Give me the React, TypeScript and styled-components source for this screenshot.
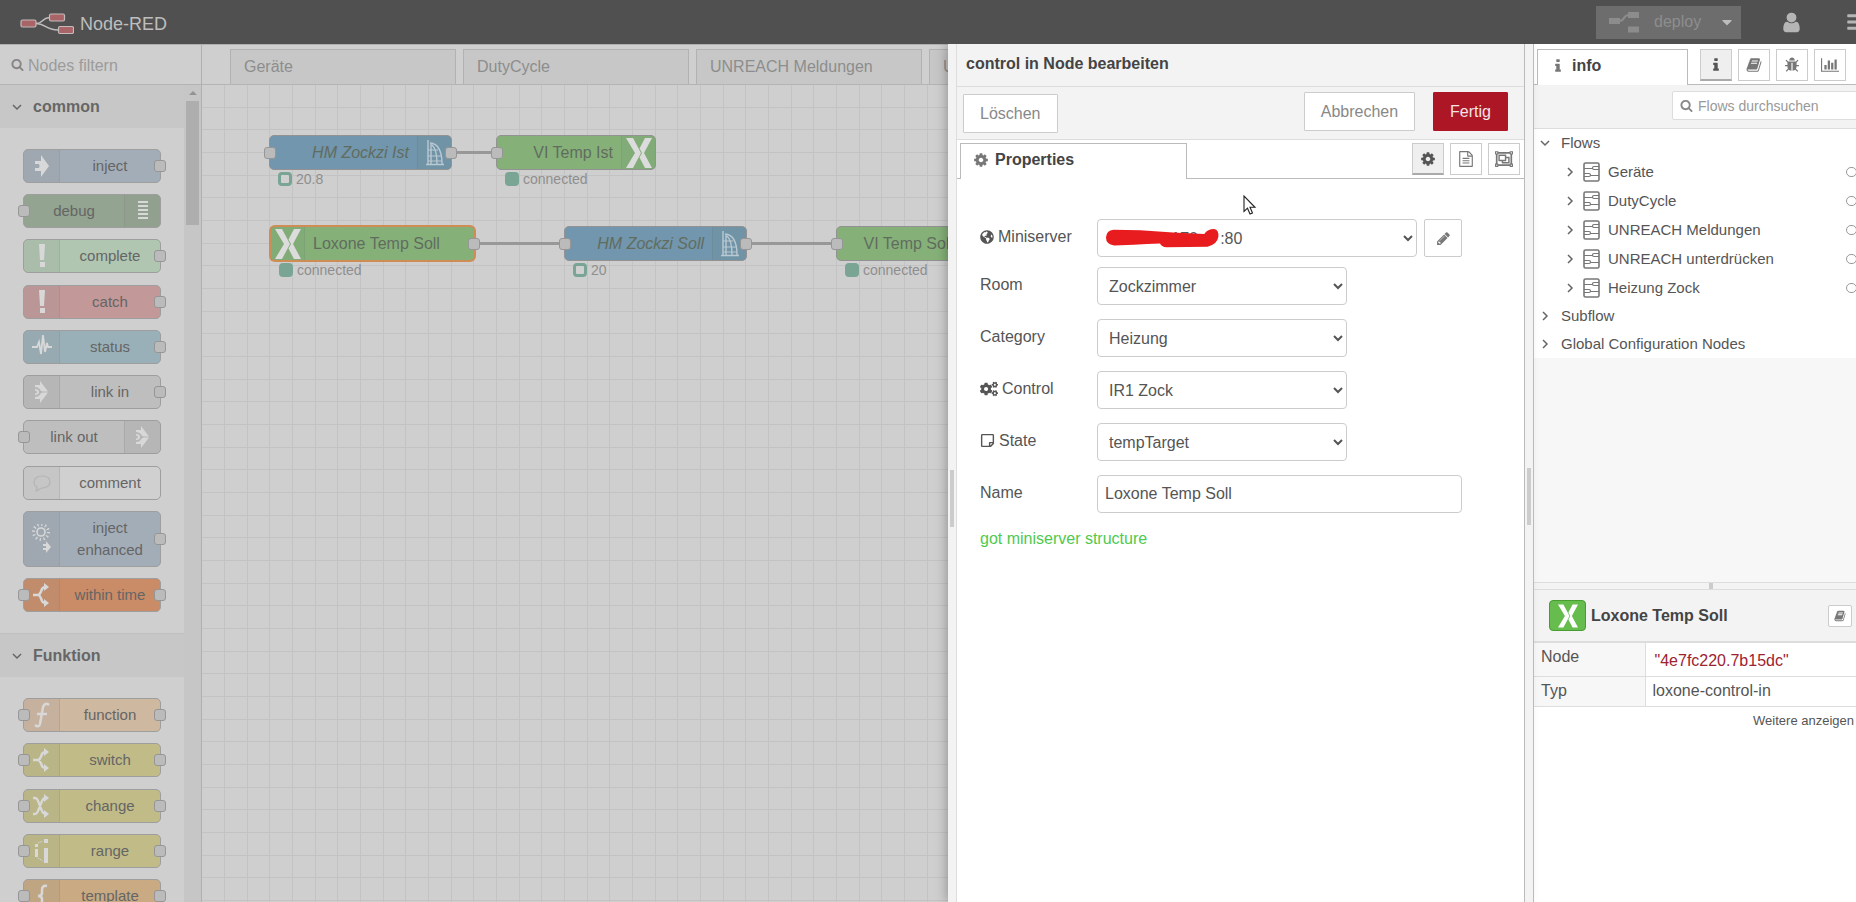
import React from "react";
import styled, { createGlobalStyle, css } from "styled-components";
import {
  FaBars,
  FaCaretDown,
  FaCogs,
  FaGlobeAmericas,
  FaRegObjectGroup,
  FaRegStickyNote,
} from "react-icons/fa";

const GlobalStyle = createGlobalStyle`
  *, *::before, *::after { box-sizing: border-box; }
  html, body { margin: 0; height: 100%; overflow: hidden; }
  body { font-family: "Liberation Sans", Arial, sans-serif; font-size: 16px; line-height: 20px; color: #555; }
  button, input, select { font: inherit; color: inherit; margin: 0; }
  svg { display: block; flex: none; }
`;

/* ---------- icons ---------- */

const PATHS = {
  search:
    "M1216 832q0-185-131.5-316.5t-316.5-131.5-316.5 131.5-131.5 316.5 131.5 316.5 316.5 131.5 316.5-131.5 131.5-316.5zm512 832q0 52-38 90t-90 38q-54 0-90-38l-343-342q-179 124-399 124-143 0-273.5-55.5t-225-150-150-225-55.5-273.5 55.5-273.5 150-225 225-150 273.5-55.5 273.5 55.5 225 150 150 225 55.5 273.5q0 220-124 399l343 343q37 37 37 90z",
  cog: "M1152 896q0-106-75-181t-181-75-181 75-75 181 75 181 181 75 181-75 75-181zm512-109v222q0 12-8 23t-20 13l-185 28q-19 54-39 91 35 50 107 138 10 12 10 25t-9 23q-27 37-99 108t-94 71q-12 0-26-9l-138-108q-44 23-91 38-16 136-29 186-7 28-36 28h-222q-14 0-24.5-8.5t-11.5-21.5l-28-184q-49-16-90-37l-141 107q-10 9-25 9-14 0-25-11-126-114-165-168-7-10-7-23 0-12 8-23 15-21 51-66.5t54-70.5q-27-50-41-99l-183-27q-13-2-21-12.5t-8-23.5v-222q0-12 8-23t19-13l186-28q14-46 39-92-40-57-107-138-10-12-10-24 0-10 9-23 26-36 98.5-107.5t94.5-71.5q13 0 26 10l138 107q44-23 91-38 16-136 29-186 7-28 36-28h222q14 0 24.5 8.5t11.5 21.5l28 184q49 16 90 37l142-107q9-9 24-9 13 0 25 10 129 119 165 170 7 8 7 22 0 12-8 23-15 21-51 66.5t-54 70.5q26 50 41 98l183 28q13 2 21 12.5t8 23.5z",
  user: "M1536 1399q0 109-62.5 187t-150.5 78h-854q-88 0-150.5-78t-62.5-187q0-85 8.5-160.5t31.5-152 58.5-131 94-89 134.5-34.5q131 128 313 128t313-128q76 0 134.5 34.5t94 89 58.5 131 31.5 152 8.5 160.5zm-256-887q0 159-112.5 271.5t-271.5 112.5-271.5-112.5-112.5-271.5 112.5-271.5 271.5-112.5 271.5 112.5 112.5 271.5z",
  info: "M1216 1344v128q0 26-19 45t-45 19h-512q-26 0-45-19t-19-45v-128q0-26 19-45t45-19h64v-384h-64q-26 0-45-19t-19-45v-128q0-26 19-45t45-19h384q26 0 45 19t19 45v576h64q26 0 45 19t19 45zm-128-1152v192q0 26-19 45t-45 19h-256q-26 0-45-19t-19-45v-192q0-26 19-45t45-19h256q26 0 45 19t19 45z",
  book: "M1703 478q40 57 18 129l-275 906q-19 64-76.5 107.5t-122.5 43.5h-923q-77 0-148.5-53.5t-99.5-131.5q-24-67-2-127 0-4 3-27t4-37q1-8-3-21.5t-3-19.5q2-11 8-21t16.5-23.5 16.5-23.5q23-38 45-91.5t30-91.5q3-10 .5-30t-.5-28q3-11 17-28t17-23q21-36 42-92t25-90q1-9-2.5-32t.5-28q4-13 22-30.5t22-22.5q19-26 42.5-84.5t27.5-96.5q1-8-3-25.5t-2-26.5q2-8 9-18t18-23 17-21q8-12 16.5-30.5t15-35 16-36 19.5-32 26.5-23.5 36-11.5 47.5 5.5l-1 3q38-9 51-9h761q74 0 114 56t18 130l-274 906q-36 119-71.5 153.5t-128.5 34.5h-869q-27 0-38 15-11 16-1 43 24 70 144 70h923q29 0 56-15.5t35-41.5l300-987q7-22 5-57 38 15 59 43zm-1064 2q-4 13 2 22.5t20 9.5h608q13 0 25.5-9.5t16.5-22.5l21-64q4-13-2-22.5t-20-9.5h-608q-13 0-25.5 9.5t-16.5 22.5zm-83 256q-4 13 2 22.5t20 9.5h608q13 0 25.5-9.5t16.5-22.5l21-64q4-13-2-22.5t-20-9.5h-608q-13 0-25.5 9.5t-16.5 22.5z",
  pencil:
    "M491 1536l91-91-235-235-91 91v107h128v128h107zm523-928q0-22-22-22-10 0-17 7l-542 542q-7 7-7 17 0 22 22 22 10 0 17-7l542-542q7-7 7-17zm-54-192l416 416-832 832h-416v-416zm683 96q0 53-37 90l-166 166-416-416 166-165q36-38 90-38 53 0 91 38l235 234q37 39 37 91z",
  file: "M1596 380q28 28 48 76t20 88v1152q0 40-28 68t-68 28h-1344q-40 0-68-28t-28-68v-1600q0-40 28-68t68-28h896q40 0 88 20t76 48zm-444-244v376h376q-10-29-22-41l-313-313q-12-12-41-22zm384 1528v-1024h-416q-40 0-68-28t-28-68v-416h-768v1536h1280zm-1024-864q0-14 9-23t23-9h704q14 0 23 9t9 23v64q0 14-9 23t-23 9h-704q-14 0-23-9t-9-23v-64zm736 224q14 0 23 9t9 23v64q0 14-9 23t-23 9h-704q-14 0-23-9t-9-23v-64q0-14 9-23t23-9h704zm0 256q14 0 23 9t9 23v64q0 14-9 23t-23 9h-704q-14 0-23-9t-9-23v-64q0-14 9-23t23-9h704z",
  chart:
    "M640 896v512h-256v-512h256zm384-512v1024h-256v-1024h256zm1024 1152v128h-2048v-1536h128v1408h1920zm-640-896v768h-256v-768h256zm384-384v1152h-256v-1152h256z",
  bug: "M1696 960q0 26-19 45t-45 19h-224q0 171-67 290l208 209q19 19 19 45t-19 45q-18 19-45 19t-45-19l-198-197q-5 5-15 13t-42 28.5-65 36.5-82 29-97 13v-896h-128v896q-51 0-101.5-13.5t-87-33-66-39-43.5-32.5l-15-14-183 207q-20 21-48 21-24 0-43-16-19-18-20.5-44.5t15.5-46.5l202-227q-58-114-58-274h-224q-26 0-45-19t-19-45 19-45 45-19h224v-294l-173-173q-19-19-19-45t19-45 45-19 45 19l173 173h844l173-173q19-19 45-19t45 19 19 45-19 45l-173 173v294h224q26 0 45 19t19 45zm-480-576h-640q0-133 93.5-226.5t226.5-93.5 226.5 93.5 93.5 226.5z",
};

function Icon({ name, size = 16, color = "currentColor" }: { name: keyof typeof PATHS; size?: number; color?: string }) {
  const wide = name === "chart";
  return (
    <svg width={wide ? size + 2 : size} height={size} viewBox={wide ? "0 0 2048 1792" : "0 0 1792 1792"} fill={color} aria-hidden>
      <path d={PATHS[name]} />
    </svg>
  );
}

function Angle({ dir, color = "#666" }: { dir: "down" | "right"; color?: string }) {
  return (
    <svg width="10" height="10" viewBox="0 0 10 10" fill="none" stroke={color} strokeWidth="1.5" aria-hidden>
      <path d={dir === "down" ? "M1 3l4 4 4-4" : "M3 1l4 4-4 4"} />
    </svg>
  );
}

function LogoIcon() {
  return (
    <svg width="54" height="22" viewBox="0 0 54 22" fill="none" aria-hidden>
      <path d="M16 10.5C24 10.5 21 4.500 31 4.500M16 10.500C26 10.500 25 17 38 17" stroke="#bdbdbd" strokeWidth="1.600" />
      <g fill="#a96467" stroke="#c4bcbc" strokeWidth="1.200">
        <rect x="1" y="7" width="15" height="7" rx="1.500" />
        <rect x="29.500" y="1" width="15" height="7" rx="1.500" />
        <rect x="38.500" y="13.500" width="15" height="7" rx="1.500" />
      </g>
    </svg>
  );
}

function DeployIcon() {
  return (
    <svg width="32" height="22" viewBox="0 0 32 22" aria-hidden>
      <path d="M11 10C18 10 14 4 21 4" fill="none" stroke="#8c8c8c" strokeWidth="2" />
      <g fill="#8c8c8c">
        <rect x="1" y="7" width="11" height="6" />
        <rect x="20" y="1" width="11" height="6" />
        <rect x="20" y="15.500" width="11" height="6" />
      </g>
    </svg>
  );
}

function FlowIcon() {
  return (
    <svg width="17" height="20" viewBox="0 0 17 20" fill="none" stroke="#777" strokeWidth="1.200" aria-hidden>
      <rect x="1" y="1" width="15" height="18" rx="1.500" strokeWidth="1.600" />
      <path d="M16 4.500H11Q9.500 4.500 9.500 6T11 7.500H16M1 6.500H9.500M1 11.500H6Q7.500 11.500 7.500 13T6 14.500H1M7.500 13.500H16" />
    </svg>
  );
}

function LoxoneIcon({ size = 30, color = "#dcdcdc" }: { size?: number; color?: string }) {
  return (
    <svg width={size - 4} height={size} viewBox="0 0 26 30" fill={color} aria-hidden>
      <path d="M0 0H7L15 15 7 30H0L9 15z" />
      <path d="M19 0H26L18 15 26 30H19L13.500 19.600 16 15 13.500 10.400z" />
    </svg>
  );
}

function HomematicIcon() {
  return (
    <svg width="20" height="26" viewBox="0 0 20 26" fill="none" stroke="#b9c9d3" strokeWidth="1.400" aria-hidden>
      <path d="M3 0V24M1 24.500H19M6 3V24M5 3Q17 4 17 24M7 5Q12 9 12 24" />
      <path d="M3 10H13M3 16H16M3 21H17" strokeWidth="1" />
    </svg>
  );
}

type Glyph =
  | "inject" | "debug" | "bang" | "status" | "link" | "comment" | "enhanced"
  | "switch" | "function" | "change" | "range" | "template";

const GLYPHS: Record<Glyph, React.ReactNode> = {
  inject: <path d="M9 4l8 11-8 11v-6H3v-3h4q1-2 0-4H3v-3h6z" />,
  debug: <path d="M5 5h10v2H5zM5 9h10v2H5zM5 13h10v2H5zM5 17h10v2H5zM5 21h10v2H5z" />,
  bang: <path d="M7 3h6l-1 16H8zM8 21h5v5H8z" />,
  status: <path d="M0 15h5l2-5 2 12 2-19 2 17 2-9 1 4h4" fill="none" stroke="currentColor" strokeWidth="1.800" />,
  link: (
    <path d="M8 4l8 10.500h-5q-2 0-3-2T3 10V8h5zM8 26l8-10.500h-5q-2 0-3 2T3 20v2h5zM3 12q4 0 4 3t-4 3v-1.500q2 0 2-1.500t-2-1.500z" />
  ),
  comment: (
    <path d="M10 8c5 0 8 2 8 6s-4 6-8 6c-2 0-3 2-6 3l1-4c-2-1-3-3-3-5 0-4 4-6 8-6z" fill="none" stroke="currentColor" strokeWidth="1.200" />
  ),
  enhanced: (
    <>
      <g fill="none" stroke="currentColor">
        <circle cx="9" cy="8" r="4" strokeWidth="1.600" />
        <circle cx="9" cy="8" r="7.500" strokeWidth="3" strokeDasharray="1.300 2.627" />
      </g>
      <path d="M14 17l5 6-5 6v-3h-3v-2h3v-2h-3v-2h3z" />
    </>
  ),
  switch: (
    <>
      <path d="M1 15h5q2 0 4-6 1-2 4-2M6 15q2 0 4 6 1 2 4 2" fill="none" stroke="currentColor" strokeWidth="2.500" />
      <path d="M12 3l5 4-5 4zM12 19l5 4-5 4z" />
    </>
  ),
  function: <path d="M17 5q-4-3-6 2L8 24q-1 4-5 1M5 14h10" fill="none" stroke="currentColor" strokeWidth="2.500" />,
  change: (
    <>
      <path d="M1 7h2q2 0 3 3l4 10q1 3 4 3M1 23h2q2 0 3-3l4-10q1-3 4-3" fill="none" stroke="currentColor" strokeWidth="2.300" />
      <path d="M12 3l5 4-5 4zM12 19l5 4-5 4z" />
    </>
  ),
  range: (
    <>
      <path d="M3 8h3v3H3zM3 13h3v8H3zM12 3h4v4h-4zM12 12h4v15h-4z" />
      <path d="M6 7l5-2M6 22l5 3" fill="none" stroke="currentColor" strokeDasharray="1.500 1" />
    </>
  ),
  template: <path d="M15 5q-5-1-5 4v3q0 3-4 3 4 0 4 3v3q0 5 5 4" fill="none" stroke="currentColor" strokeWidth="2.500" />,
};

function NodeGlyph({ glyph }: { glyph: Glyph }) {
  return (
    <svg width="20" height="30" viewBox="0 0 20 30" fill="currentColor" aria-hidden>
      {GLYPHS[glyph]}
    </svg>
  );
}

/* ---------- shell ---------- */

const Shell = styled.div`
  width: calc(100% + 32px);
  height: 100vh;
  display: flex;
  flex-direction: column;
  overflow: hidden;
`;

const Header = styled.header`
  position: relative;
  z-index: 2;
  flex: none;
  height: 44px;
  display: flex;
  align-items: center;
  justify-content: space-between;
  padding: 0 21px 0 20px;
  background: #505050;
`;

const Brand = styled.div`
  display: flex;
  align-items: center;
  gap: 6px;
  font-size: 18px;
  color: #bebebe;
  padding-top: 3px;
`;

const HeaderTools = styled.div`
  display: flex;
  align-items: center;
`;

const DeployButton = styled.button`
  width: 145px;
  height: 33px;
  margin: 0 39px 0 0;
  padding: 0 6px 0 12px;
  display: flex;
  align-items: center;
  gap: 14px;
  border: 0;
  background: #6d6d6d;
  color: #8e8e8e;
  svg:last-child { color: #bdbdbd; margin-left: auto; }
`;

const HeaderIcon = styled.button`
  width: 22px;
  height: 33px;
  padding: 0;
  margin: 0 43px 0 0;
  display: grid;
  place-items: center;
  border: 0;
  background: none;
  color: #b5b5b5;
  &:last-child { margin-right: 0; }
`;

const Main = styled.div`
  flex: 1;
  min-height: 0;
  display: flex;
`;

/* ---------- palette ---------- */

const Palette = styled.aside`
  flex: 0 0 202px;
  min-width: 0;
  display: flex;
  flex-direction: column;
  border-right: 1px solid #b0b0b0;
  border-top: 1px solid #b0b0b0;
  background: #cfcfcf;
`;

const PaletteSearch = styled.label`
  flex: none;
  height: 40px;
  display: flex;
  align-items: center;
  gap: 4px;
  padding-left: 11px;
  border-bottom: 1px solid #b4b4b4;
  color: #858585;
  input {
    min-width: 0;
    flex: 1;
    padding: 2px 0 0;
    border: 0;
    outline: 0;
    background: none;
  }
  input::placeholder { color: #9b9b9b; }
`;

const PaletteBody = styled.div`
  flex: 1;
  min-height: 0;
  display: flex;
  overflow: hidden;
`;

const PaletteList = styled.div`
  flex: 1;
  height: max-content;
`;

const ScrollTrack = styled.div`
  flex: 0 0 17px;
  display: flex;
  flex-direction: column;
  align-items: center;
  gap: 6px;
  padding-top: 6px;
  background: #c6c6c6;
`;

const ScrollArrow = styled.div`
  border: 4px solid transparent;
  border-top: 0;
  border-bottom-color: #939393;
`;

const ScrollThumb = styled.div`
  width: 13px;
  height: 124px;
  background: #aeaeae;
`;

const CategoryHeader = styled.h2`
  margin: 0;
  height: 43px;
  display: flex;
  align-items: center;
  gap: 11px;
  padding-left: 12px;
  background: #c7c7c7;
  font-size: 16px;
  color: #666;
`;

const CategoryNodes = styled.div<{ $height: number }>`
  height: ${(p) => p.$height}px;
  padding: 21px 23px;
  display: flex;
  flex-direction: column;
  justify-content: space-between;
  border-bottom: 1px solid #c0c0c0;
`;

const PaletteNode = styled.div<{ $color: string; $flip?: boolean; $tall?: boolean }>`
  position: relative;
  width: 138px;
  height: ${(p) => (p.$tall ? 56 : 34)}px;
  display: flex;
  flex-direction: ${(p) => (p.$flip ? "row-reverse" : "row")};
  border: 1px solid #9e9e9e;
  border-radius: 5px;
  background: ${(p) => p.$color};
`;

const iconWell = css`
  display: grid;
  place-items: center;
  flex: none;
  background: rgba(140, 140, 140, 0.15);
`;

const PaletteIcon = styled.div<{ $flip?: boolean; $faint?: boolean }>`
  ${iconWell}
  width: 36px;
  color: ${(p) => (p.$faint ? "#b4b4b4" : "#d8d8d8")};
  border-radius: ${(p) => (p.$flip ? "0 4px 4px 0" : "4px 0 0 4px")};
  border-${(p) => (p.$flip ? "left" : "right")}: 1px solid rgba(120, 120, 120, 0.2);
`;

const PaletteLabel = styled.div`
  flex: 1;
  display: grid;
  place-items: center;
  text-align: center;
  font-size: 15px;
  line-height: 22px;
  color: #656565;
`;

const Port = styled.span<{ $side: "in" | "out" }>`
  position: absolute;
  top: calc(50% - 6px);
  ${(p) => (p.$side === "in" ? "left" : "right")}: -6px;
  width: 12px;
  height: 12px;
  border: 1px solid #969696;
  border-radius: 3px;
  background: #bbb;
`;

/* ---------- workspace ---------- */

const Workspace = styled.main`
  flex: 1;
  min-width: 0;
  display: flex;
  flex-direction: column;
  overflow: hidden;
  border-top: 1px solid #b0b0b0;
  background: #cfcfcf;
`;

const WorkspaceTabs = styled.nav`
  flex: none;
  height: 40px;
  display: flex;
  align-items: flex-end;
  gap: 7px;
  padding-left: 28px;
  border-bottom: 1px solid #b4b4b4;
`;

const WorkspaceTab = styled.a`
  flex: 0 0 226px;
  height: 35px;
  padding: 7px 13px;
  border: 1px solid #b2b2b2;
  border-bottom: 0;
  background: #c7c7c7;
  color: #8d8d8d;
  text-decoration: none;
  white-space: nowrap;
`;

const Canvas = styled.div`
  position: relative;
  flex: 1;
  overflow: hidden;
`;

const Grid = styled.svg`
  width: 100%;
  height: 100%;
`;

const Wire = styled.div<{ $x: number; $y: number; $length: number }>`
  position: absolute;
  left: ${(p) => p.$x}px;
  top: ${(p) => p.$y}px;
  width: ${(p) => p.$length}px;
  height: 3px;
  background: #989898;
`;

const FlowNode = styled.div<{ $x: number; $y: number; $w: number; $color: string; $selected?: boolean; $flip?: boolean }>`
  position: absolute;
  left: ${(p) => p.$x}px;
  top: ${(p) => p.$y}px;
  width: ${(p) => p.$w}px;
  height: 35px;
  display: flex;
  flex-direction: ${(p) => (p.$flip ? "row-reverse" : "row")};
  border: 1px solid ${(p) => (p.$selected ? "#cf8d55" : "#929292")};
  box-shadow: ${(p) => (p.$selected ? "0 0 0 1px #cf8d55" : "none")};
  border-radius: 5px;
  background: ${(p) => p.$color};
`;

const FlowIconWell = styled.div<{ $flip?: boolean }>`
  ${iconWell}
  width: 34px;
  background: rgba(110, 130, 110, 0.1);
  border-${(p) => (p.$flip ? "left" : "right")}: 1px solid rgba(90, 90, 90, 0.12);
`;

const FlowLabel = styled.div<{ $italic?: boolean; $flip?: boolean }>`
  flex: 1;
  padding: 0 8px;
  line-height: 33px;
  text-align: ${(p) => (p.$flip ? "right" : "left")};
  font-style: ${(p) => (p.$italic ? "italic" : "normal")};
  color: #616c5f;
  white-space: nowrap;
`;

const FlowStatus = styled.div`
  position: absolute;
  left: 8px;
  top: 35px;
  display: flex;
  align-items: center;
  gap: 4px;
  font-size: 14px;
  line-height: 16px;
  color: #8e8e8e;
`;

const StatusDot = styled.span<{ $ring?: boolean }>`
  width: 14px;
  height: 14px;
  border: 3px solid #7aa595;
  border-radius: 4px;
  background: ${(p) => (p.$ring ? "#d0d0d0" : "#7aa595")};
`;

/* ---------- edit tray ---------- */

const Tray = styled.section`
  position: relative;
  z-index: 1;
  flex: 0 0 577px;
  display: flex;
  background: #fff;
  border-right: 1px solid #bbb;
  box-shadow: 0 0 12px rgba(0, 0, 0, 0.35);
`;

const Separator = styled.div`
  flex: 0 0 9px;
  display: flex;
  align-items: center;
  justify-content: center;
  border-right: 1px solid #ddd;
  background: #f3f3f3;
  padding-top: 50px;
  &::before {
    content: "";
    width: 4px;
    height: 57px;
    background: #ccc;
  }
`;

const SidebarSeparator = styled(Separator)`
  position: relative;
  z-index: 1;
  border-right-color: #bbb;
  padding-top: 46px;
`;

const TrayBody = styled.div`
  flex: 1;
  min-width: 0;
`;

const TrayTitle = styled.h1`
  margin: 0;
  height: 43px;
  padding: 10px 9px;
  border-bottom: 1px solid #ddd;
  background: #f3f3f3;
  font-size: 16px;
  line-height: 20px;
  color: #444;
`;

const TrayToolbar = styled.div`
  height: 53px;
  display: flex;
  align-items: flex-start;
  padding: 5px 16px 0 6px;
  border-bottom: 1px solid #ddd;
  background: #f3f3f3;
`;

const TrayButton = styled.button<{ $primary?: boolean; $left?: boolean }>`
  height: 39px;
  padding: 0 16px;
  margin: ${(p) => (p.$left ? "2px auto 0 0" : "0 0 0 18px")};
  border: 1px solid ${(p) => (p.$primary ? "#ad1625" : "#ccc")};
  border-radius: 1px;
  background: ${(p) => (p.$primary ? "#ad1625" : "#fff")};
  color: ${(p) => (p.$primary ? "#f3e4e5" : "#888")};
`;

const TabRow = styled.div<{ $pad: number }>`
  height: ${(p) => (p.$pad === 4 ? 39 : 41)}px;
  display: flex;
  align-items: flex-end;
  padding: 0 ${(p) => p.$pad}px 0 3px;
  border-bottom: 1px solid #bbb;
  background: #fff;
`;

const ActiveTab = styled.div<{ $width: number }>`
  flex: 0 0 ${(p) => p.$width}px;
  height: 36px;
  margin: 0 auto -1px 0;
  display: flex;
  align-items: center;
  gap: 6px;
  padding: 0 12px 3px;
  border: 1px solid #bbb;
  border-bottom: 0;
  background: #fff;
  font-weight: bold;
  color: #444;
  svg { color: #777; }
`;

const IconButton = styled.button<{ $on?: boolean }>`
  flex: none;
  width: 32px;
  height: 32px;
  margin: 0 0 3px 6px;
  padding: 0;
  display: grid;
  place-items: center;
  border: 1px solid #ccc;
  border-bottom: ${(p) => (p.$on ? "2px solid #aaa" : "1px solid #ccc")};
  background: ${(p) => (p.$on ? "#efefef" : "#fff")};
  color: ${(p) => (p.$on ? "#555" : "#777")};
`;

const Form = styled.form`
  padding: 40px 23px 0;
`;

const FormRow = styled.div<{ $tight?: boolean }>`
  display: flex;
  align-items: center;
  margin-bottom: ${(p) => (p.$tight ? 10 : 14)}px;
`;

const FormLabel = styled.label`
  flex: 0 0 117px;
  display: flex;
  align-items: center;
  gap: 4px;
  padding-bottom: 3px;
  color: #555;
`;

const SelectWrap = styled.div<{ $width: number }>`
  position: relative;
  width: ${(p) => p.$width}px;
`;

const Select = styled.select`
  width: 100%;
  height: 38px;
  padding: 0 5px 0 7px;
  border: 1px solid #ccc;
  border-radius: 4px;
  background: #fff;
  color: #555;
`;

const Redaction = styled.svg`
  position: absolute;
  left: 8px;
  top: 10px;
  pointer-events: none;
`;

const TextInput = styled.input`
  width: 365px;
  height: 38px;
  padding: 0 7px;
  border: 1px solid #ccc;
  border-radius: 4px;
  color: #555;
`;

const EditButton = styled.button`
  width: 38px;
  height: 38px;
  margin-left: 7px;
  padding: 0;
  display: grid;
  place-items: center;
  border: 1px solid #ccc;
  border-radius: 2px;
  background: #fff;
  color: #777;
`;

const FormMessage = styled.p`
  margin: 16px 0 0;
  color: #4fc94f;
`;

const Pointer = styled.svg`
  position: absolute;
  left: 295px;
  top: 151px;
`;

/* ---------- sidebar ---------- */

const Sidebar = styled.aside`
  flex: 0 0 354px;
  display: flex;
  flex-direction: column;
  background: #fff;
`;

const SidebarSearch = styled.div`
  flex: none;
  height: 44px;
  display: flex;
  justify-content: flex-end;
  align-items: center;
  padding-bottom: 2px;
  border-bottom: 1px solid #ddd;
  background: #f3f3f3;
`;

const SearchBox = styled.label`
  width: 216px;
  height: 29px;
  display: flex;
  align-items: center;
  gap: 5px;
  padding-left: 7px;
  border: 1px solid #ddd;
  border-radius: 2px;
  background: #fff;
  color: #888;
  font-size: 14px;
  input {
    min-width: 0;
    flex: 1;
    padding: 0;
    border: 0;
    outline: 0;
    background: none;
  }
  input::placeholder { color: #999; }
`;

const Outliner = styled.div`
  flex: 1;
  min-height: 0;
  background: #f7f7f7;
`;

const Tree = styled.ul`
  margin: 0;
  padding: 0;
  list-style: none;
  background: #fff;
  font-size: 15px;
`;

const TreeRow = styled.li<{ $child?: boolean }>`
  height: ${(p) => (p.$child ? 29 : 28)}px;
  display: flex;
  align-items: center;
  gap: ${(p) => (p.$child ? 8 : 11)}px;
  padding: 0 31px 0 ${(p) => (p.$child ? 31 : 6)}px;
  color: #555;
`;

const TreeStatus = styled.span`
  width: 11px;
  height: 10px;
  margin-left: auto;
  border: 1px solid #999;
  border-radius: 5px;
`;

const RowSplitter = styled.div`
  flex: 0 0 8px;
  display: flex;
  justify-content: center;
  border: 1px solid #ddd;
  border-width: 1px 0;
  background: #f3f3f3;
  &::before {
    content: "";
    width: 4px;
    background: #ccc;
  }
`;

const InfoPanel = styled.div`
  flex: 0 0 312px;
`;

const InfoHeader = styled.div`
  height: 53px;
  display: flex;
  align-items: center;
  gap: 5px;
  padding: 0 36px 0 15px;
  border-bottom: 2px solid #ddd;
  background: #f3f3f3;
  font-weight: bold;
  color: #444;
`;

const NodeBadge = styled.span`
  width: 37px;
  height: 31px;
  display: grid;
  place-items: center;
  border: 1px solid #479e30;
  border-radius: 4px;
  background: #66bc4d;
`;

const HelpButton = styled.button`
  width: 24px;
  height: 22px;
  margin-left: auto;
  padding: 0;
  display: grid;
  place-items: center;
  border: 1px solid #ccc;
  border-radius: 2px;
  background: #fff;
  color: #777;
`;

const InfoTable = styled.table`
  width: 100%;
  border-collapse: collapse;
  th, td {
    height: 30px;
    padding: 4px 7px 2px;
    border-bottom: 1px solid #ddd;
    text-align: left;
    vertical-align: top;
    font-weight: normal;
  }
  th { width: 111px; background: #f7f7f7; border-right: 1px solid #ddd; }
  code { display: block; height: 27px; padding: 4px 2px; font: inherit; color: #9d2330; }
`;

const MoreLink = styled.a`
  display: block;
  padding: 4px 34px 0 0;
  text-align: right;
  font-size: 13px;
  color: #555;
  text-decoration: none;
`;

/* ---------- data ---------- */

interface PaletteItem {
  label: string;
  glyph: Glyph;
  color: string;
  ports: ("in" | "out")[];
  flip?: boolean;
  tall?: boolean;
}

const COMMON: PaletteItem[] = [
  { label: "inject", glyph: "inject", color: "#a3adb8", ports: ["out"] },
  { label: "debug", glyph: "debug", color: "#93a490", ports: ["in"], flip: true },
  { label: "complete", glyph: "bang", color: "#b0c6b1", ports: ["out"] },
  { label: "catch", glyph: "bang", color: "#c39898", ports: ["out"] },
  { label: "status", glyph: "status", color: "#9ab0b8", ports: ["out"] },
  { label: "link in", glyph: "link", color: "#bebebe", ports: ["out"] },
  { label: "link out", glyph: "link", color: "#bebebe", ports: ["in"], flip: true },
  { label: "comment", glyph: "comment", color: "#d0d0d0", ports: [] },
  { label: "inject enhanced", glyph: "enhanced", color: "#a3adb8", ports: ["out"], tall: true },
  { label: "within time", glyph: "switch", color: "#ca8c66", ports: ["in", "out"] },
];

const FUNCTIONS: PaletteItem[] = [
  { label: "function", glyph: "function", color: "#cfb8a0", ports: ["in", "out"] },
  { label: "switch", glyph: "switch", color: "#c1bc87", ports: ["in", "out"] },
  { label: "change", glyph: "change", color: "#c1bc87", ports: ["in", "out"] },
  { label: "range", glyph: "range", color: "#c1bc87", ports: ["in", "out"] },
  { label: "template", glyph: "template", color: "#c9aa82", ports: ["in", "out"] },
];

const FLOWS = ["Geräte", "DutyCycle", "UNREACH Meldungen", "UNREACH unterdrücken", "Heizung Zock"];

const BLUE = "#7196ad";
const GREEN = "#85b179";

const NODES = [
  { label: "HM Zockzi Ist", x: 67, y: 50, w: 183, hm: true, flip: true, ports: ["in", "out"], status: "20.8" },
  { label: "VI Temp Ist", x: 294, y: 50, w: 160, hm: false, flip: true, ports: ["in"], status: "connected" },
  { label: "Loxone Temp Soll", x: 68, y: 141, w: 205, hm: false, flip: false, ports: ["out"], status: "connected", selected: true },
  { label: "HM Zockzi Soll", x: 362, y: 141, w: 183, hm: true, flip: true, ports: ["in", "out"], status: "20" },
  { label: "VI Temp Soll", x: 634, y: 141, w: 160, hm: false, flip: true, ports: ["in"], status: "connected" },
];

const FIELDS = [
  { id: "room", label: "Room", value: "Zockzimmer" },
  { id: "category", label: "Category", value: "Heizung" },
  { id: "control", label: "Control", value: "IR1 Zock", icon: <FaCogs size={18} /> },
  { id: "state", label: "State", value: "tempTarget", icon: <FaRegStickyNote size={15} /> },
];

const SERVER = "\u00a0".repeat(14) + "170" + "\u00a0".repeat(5) + ":80";

function PaletteCategory({ title, items, height }: { title: string; items: PaletteItem[]; height: number }) {
  return (
    <section>
      <CategoryHeader>
        <Angle dir="down" />
        {title}
      </CategoryHeader>
      <CategoryNodes $height={height}>
        {items.map((n) => (
          <PaletteNode key={n.label} $color={n.color} $flip={n.flip} $tall={n.tall}>
            <PaletteIcon $flip={n.flip} $faint={n.glyph === "comment"}>
              <NodeGlyph glyph={n.glyph} />
            </PaletteIcon>
            <PaletteLabel>{n.label}</PaletteLabel>
            {n.ports.map((p) => (
              <Port key={p} $side={p} />
            ))}
          </PaletteNode>
        ))}
      </CategoryNodes>
    </section>
  );
}

export default function App() {
  return (
    <>
      <GlobalStyle />
      <Shell>
        <Header>
          <Brand>
            <LogoIcon />
            Node-RED
          </Brand>
          <HeaderTools>
            <DeployButton type="button">
              <DeployIcon />
              deploy
              <FaCaretDown size={16} />
            </DeployButton>
            <HeaderIcon type="button" aria-label="User">
              <Icon name="user" size={23} />
            </HeaderIcon>
            <HeaderIcon type="button" aria-label="Menu">
              <FaBars size={20} />
            </HeaderIcon>
          </HeaderTools>
        </Header>

        <Main>
          <Palette>
            <PaletteSearch>
              <Icon name="search" size={13} />
              <input placeholder="Nodes filtern" aria-label="Nodes filtern" />
            </PaletteSearch>
            <PaletteBody>
              <PaletteList>
                <PaletteCategory title="common" items={COMMON} height={506} />
                <PaletteCategory title="Funktion" items={FUNCTIONS} height={258} />
              </PaletteList>
              <ScrollTrack>
                <ScrollArrow />
                <ScrollThumb />
              </ScrollTrack>
            </PaletteBody>
          </Palette>

          <Workspace>
            <WorkspaceTabs>
              {FLOWS.slice(0, 4).map((f) => (
                <WorkspaceTab key={f} href="#">
                  {f}
                </WorkspaceTab>
              ))}
            </WorkspaceTabs>
            <Canvas>
              <Grid aria-hidden>
                <defs>
                  <pattern id="grid" width="68" height="68" patternUnits="userSpaceOnUse">
                    <path d="M22.500 0V68M45.500 0V68M67.500 0V68M0 22.500H68M0 44.500H68M0 67.500H68" stroke="#c3c3c3" />
                  </pattern>
                </defs>
                <rect width="100%" height="100%" fill="url(#grid)" />
              </Grid>
              <Wire $x={250} $y={66} $length={44} />
              <Wire $x={273} $y={157} $length={89} />
              <Wire $x={545} $y={157} $length={89} />
              {NODES.map((n) => (
                <FlowNode key={n.label} $x={n.x} $y={n.y} $w={n.w} $color={n.hm ? BLUE : GREEN} $selected={n.selected} $flip={n.flip}>
                  <FlowIconWell $flip={n.flip}>{n.hm ? <HomematicIcon /> : <LoxoneIcon />}</FlowIconWell>
                  <FlowLabel $italic={n.hm} $flip={n.flip}>
                    {n.label}
                  </FlowLabel>
                  {n.ports.map((p) => (
                    <Port key={p} $side={p as "in" | "out"} />
                  ))}
                  <FlowStatus>
                    <StatusDot $ring={n.hm} />
                    {n.status}
                  </FlowStatus>
                </FlowNode>
              ))}
            </Canvas>
          </Workspace>

          <Tray>
            <Separator />
            <TrayBody>
              <TrayTitle>control in Node bearbeiten</TrayTitle>
              <TrayToolbar>
                <TrayButton type="button" $left>
                  Löschen
                </TrayButton>
                <TrayButton type="button">Abbrechen</TrayButton>
                <TrayButton type="button" $primary>
                  Fertig
                </TrayButton>
              </TrayToolbar>
              <TabRow $pad={4}>
                <ActiveTab $width={227}>
                  <Icon name="cog" size={16} />
                  Properties
                </ActiveTab>
                <IconButton type="button" $on aria-label="Properties">
                  <Icon name="cog" size={16} />
                </IconButton>
                <IconButton type="button" aria-label="Description">
                  <Icon name="file" size={16} />
                </IconButton>
                <IconButton type="button" aria-label="Appearance">
                  <FaRegObjectGroup size={18} />
                </IconButton>
              </TabRow>
              <Form>
                <FormRow $tight>
                  <FormLabel htmlFor="miniserver">
                    <FaGlobeAmericas size={14} />
                    Miniserver
                  </FormLabel>
                  <SelectWrap $width={320}>
                    <Select id="miniserver">
                      <option>{SERVER}</option>
                    </Select>
                    <Redaction width="115" height="19" viewBox="495 688 345 58" aria-hidden>
                      <path
                        d="M518 690L600 692 700 699 795 703Q805 688 825 688 840 690 838 712 835 735 805 742L680 744Q664 742 660 732 620 733 580 736L520 738Q495 735 495 714 496 692 518 690Z"
                        fill="#e81c1f"
                      />
                    </Redaction>
                  </SelectWrap>
                  <EditButton type="button" aria-label="Edit">
                    <Icon name="pencil" size={15} />
                  </EditButton>
                </FormRow>
                {FIELDS.map((f) => (
                  <FormRow key={f.id}>
                    <FormLabel htmlFor={f.id}>
                      {f.icon}
                      {f.label}
                    </FormLabel>
                    <SelectWrap $width={250}>
                      <Select id={f.id}>
                        <option>{f.value}</option>
                      </Select>
                    </SelectWrap>
                  </FormRow>
                ))}
                <FormRow>
                  <FormLabel htmlFor="name">Name</FormLabel>
                  <TextInput id="name" defaultValue="Loxone Temp Soll" />
                </FormRow>
                <FormMessage>got miniserver structure</FormMessage>
              </Form>
            </TrayBody>
            <Pointer width="14" height="21" viewBox="0 0 14 21" aria-hidden>
              <path d="M1 1V16.500L4.500 13.200 7 19 9.500 18 7 12.300H12z" fill="#fff" stroke="#222" strokeWidth="1.100" />
            </Pointer>
          </Tray>

          <SidebarSeparator />

          <Sidebar>
            <TabRow $pad={42}>
              <ActiveTab $width={151}>
                <Icon name="info" size={16} />
                info
              </ActiveTab>
              <IconButton type="button" $on aria-label="Info">
                <Icon name="info" size={16} />
              </IconButton>
              <IconButton type="button" aria-label="Help">
                <Icon name="book" size={16} />
              </IconButton>
              <IconButton type="button" aria-label="Debug">
                <Icon name="bug" size={16} />
              </IconButton>
              <IconButton type="button" aria-label="Dashboard">
                <Icon name="chart" size={16} />
              </IconButton>
            </TabRow>
            <SidebarSearch>
              <SearchBox>
                <Icon name="search" size={13} />
                <input placeholder="Flows durchsuchen" aria-label="Flows durchsuchen" />
              </SearchBox>
            </SidebarSearch>
            <Outliner>
              <Tree>
                <TreeRow>
                  <Angle dir="down" />
                  Flows
                </TreeRow>
                {FLOWS.map((f) => (
                  <TreeRow key={f} $child>
                    <Angle dir="right" />
                    <FlowIcon />
                    {f}
                    <TreeStatus />
                  </TreeRow>
                ))}
                <TreeRow>
                  <Angle dir="right" />
                  Subflow
                </TreeRow>
                <TreeRow>
                  <Angle dir="right" />
                  Global Configuration Nodes
                </TreeRow>
              </Tree>
            </Outliner>
            <RowSplitter />
            <InfoPanel>
              <InfoHeader>
                <NodeBadge>
                  <LoxoneIcon size={24} color="#fff" />
                </NodeBadge>
                Loxone Temp Soll
                <HelpButton type="button" aria-label="Show help">
                  <Icon name="book" size={12} />
                </HelpButton>
              </InfoHeader>
              <InfoTable>
                <tbody>
                  <tr>
                    <th scope="row">Node</th>
                    <td>
                      <code>"4e7fc220.7b15dc"</code>
                    </td>
                  </tr>
                  <tr>
                    <th scope="row">Typ</th>
                    <td>loxone-control-in</td>
                  </tr>
                </tbody>
              </InfoTable>
              <MoreLink href="#">Weitere anzeigen</MoreLink>
            </InfoPanel>
          </Sidebar>
        </Main>
      </Shell>
    </>
  );
}
